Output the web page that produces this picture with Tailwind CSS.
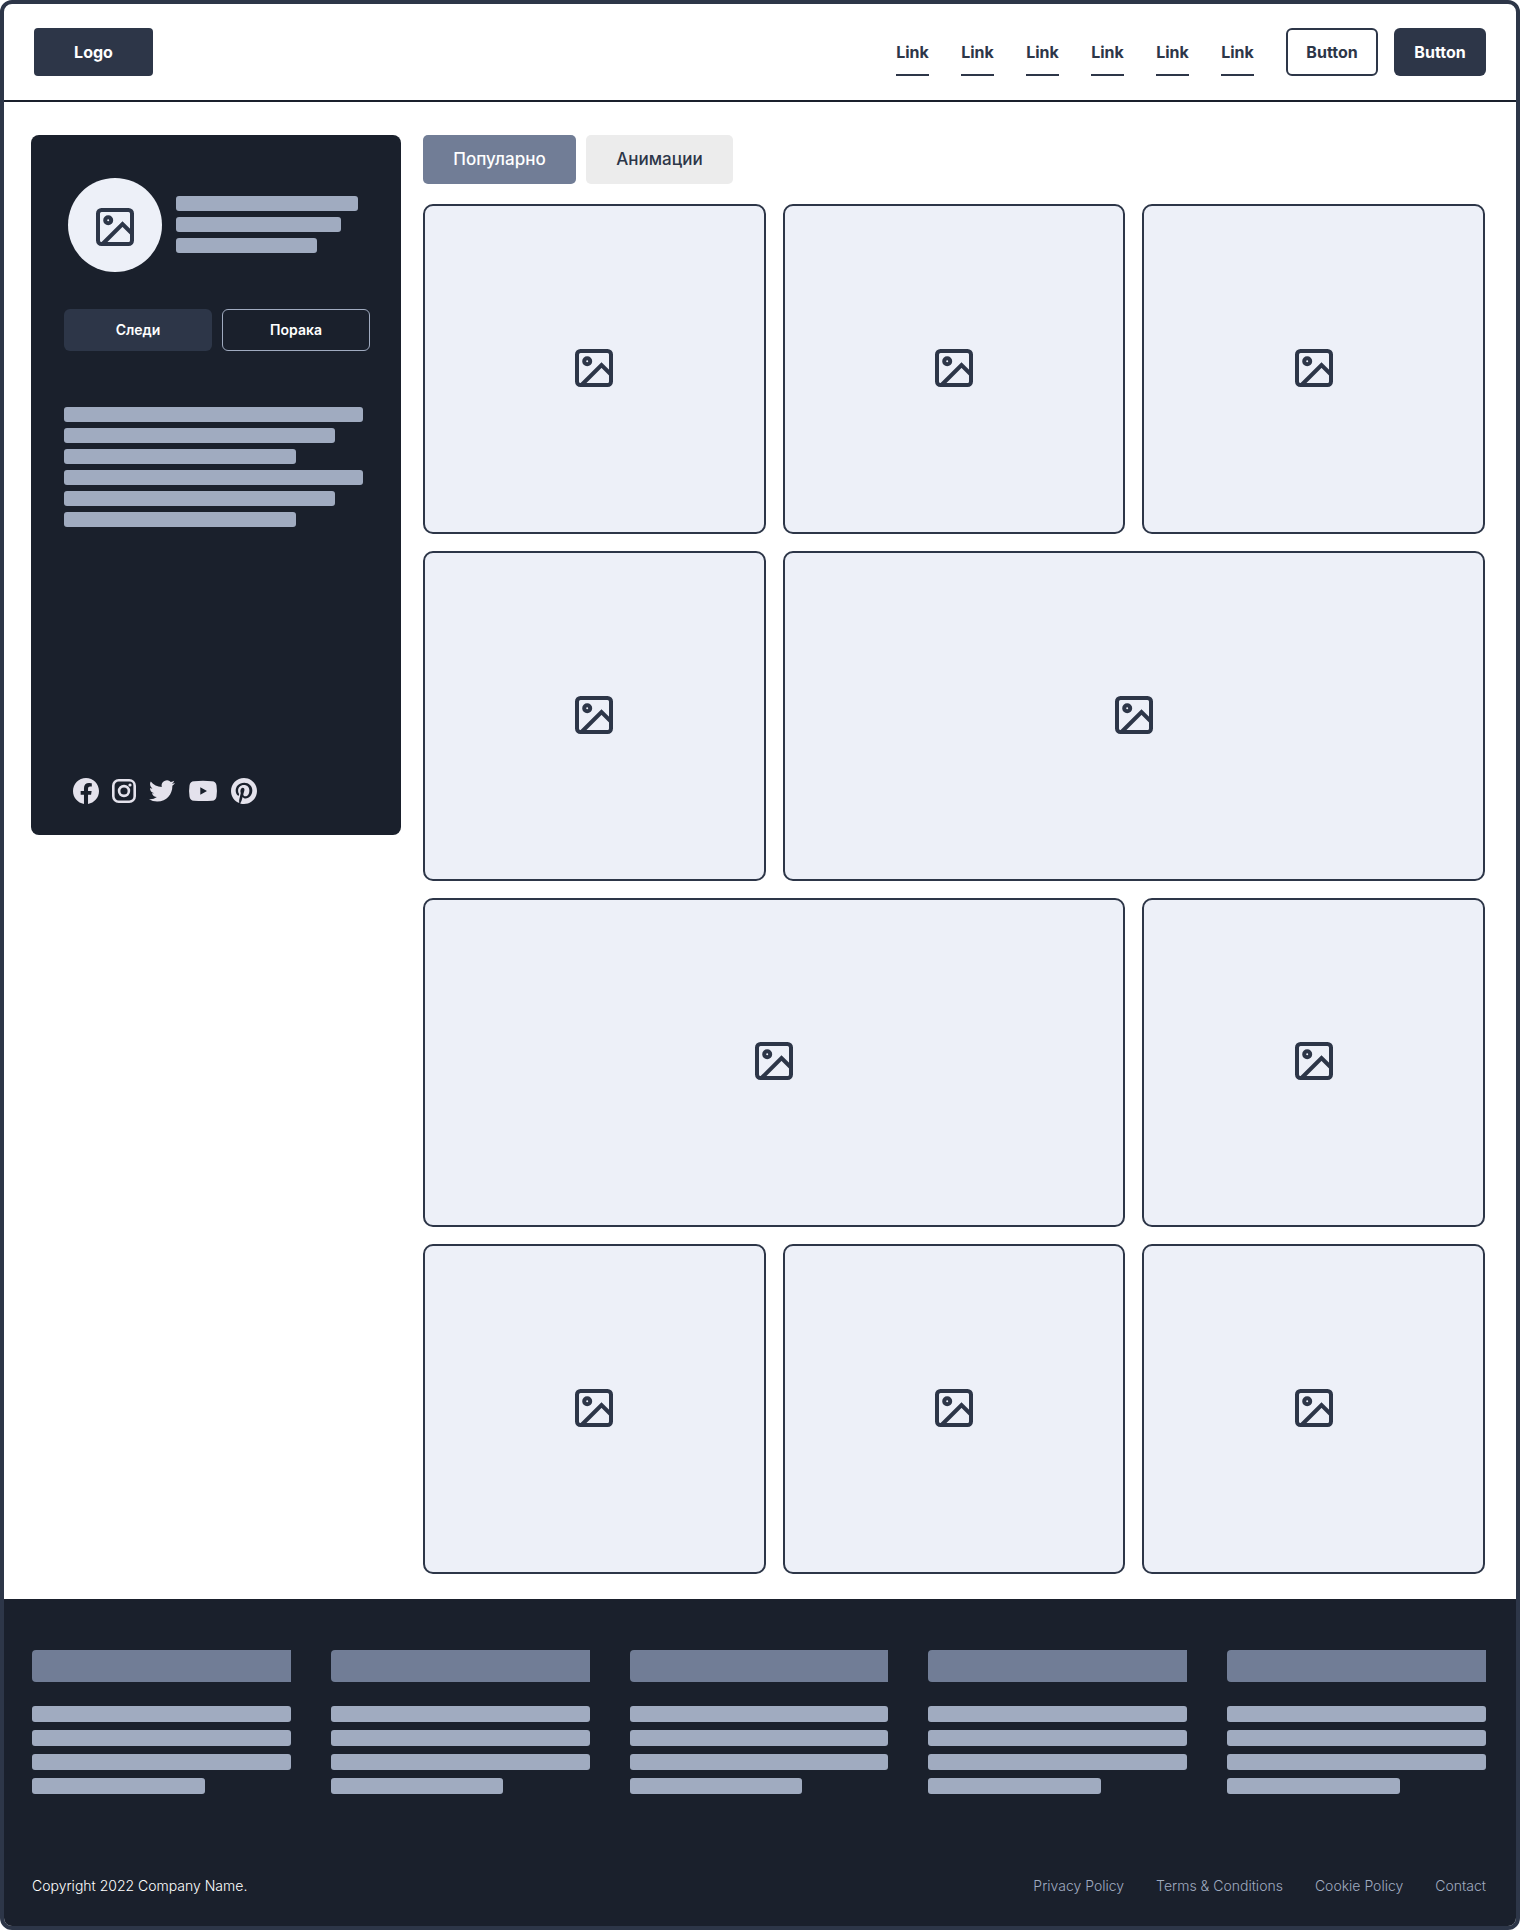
<!DOCTYPE html>
<html lang="mk">
<head>
<meta charset="utf-8">
<meta name="viewport" content="width=device-width, initial-scale=1">
<title>Profile gallery</title>
<script src="https://cdn.jsdelivr.net/npm/@tailwindcss/browser@4"></script>
</head>
<body class="bg-white font-['Inter',sans-serif] text-[#2d3648]">
<svg class="hidden" aria-hidden="true">
  <symbol id="image" viewBox="0 1 48 48">
    <g fill="none" stroke="currentColor" stroke-width="4" stroke-linecap="butt" stroke-linejoin="round">
      <rect x="7" y="7" width="34" height="34" rx="3.5"/>
      <circle cx="17.2" cy="17.2" r="3"/>
      <path d="M12 40.5 31.5 21 41 30.5" stroke-linejoin="miter"/>
    </g>
  </symbol>
</svg>
<div class="flex min-h-screen flex-col overflow-hidden rounded-xl border-4 border-[#2d3648]">
  <header class="flex items-center justify-between border-b-2 border-[#1a202c] px-[30px] py-6 text-base font-bold">
    <a href="#" class="flex h-12 w-[119px] items-center justify-center rounded bg-[#2d3648] text-white">Logo</a>
    <div class="flex items-center gap-8">
      <nav class="flex gap-8">
        <a href="#" class="flex h-12 w-[33px] items-center justify-center border-b-2 border-[#2d3648] pt-0.5">Link</a>
        <a href="#" class="flex h-12 w-[33px] items-center justify-center border-b-2 border-[#2d3648] pt-0.5">Link</a>
        <a href="#" class="flex h-12 w-[33px] items-center justify-center border-b-2 border-[#2d3648] pt-0.5">Link</a>
        <a href="#" class="flex h-12 w-[33px] items-center justify-center border-b-2 border-[#2d3648] pt-0.5">Link</a>
        <a href="#" class="flex h-12 w-[33px] items-center justify-center border-b-2 border-[#2d3648] pt-0.5">Link</a>
        <a href="#" class="flex h-12 w-[33px] items-center justify-center border-b-2 border-[#2d3648] pt-0.5">Link</a>
      </nav>
      <div class="flex gap-4">
        <button class="h-12 w-[92px] rounded-md border-2 border-[#2d3648]">Button</button>
        <button class="h-12 w-[92px] rounded-md bg-[#2d3648] text-white">Button</button>
      </div>
    </div>
  </header>

  <main class="flex items-start gap-[22px] pt-[33px] pr-[31px] pb-[25px] pl-[27px]">
    <aside class="flex h-[700px] w-[370px] shrink-0 flex-col rounded-lg bg-[#1a202c] pt-[43px] pr-[31px] pb-[31px] pl-[33px]">
      <div class="flex gap-[14px] pl-1">
        <div class="flex size-[94px] items-center justify-center rounded-full bg-[#edf0f8] pt-1.5">
          <svg class="size-12"><use href="#image"/></svg>
        </div>
        <div class="flex flex-col gap-1.5 pt-[18px]">
          <div class="h-[15px] w-[182px] rounded-[3px] bg-[#a0abc0]"></div>
          <div class="h-[15px] w-[165px] rounded-[3px] bg-[#a0abc0]"></div>
          <div class="h-[15px] w-[141px] rounded-[3px] bg-[#a0abc0]"></div>
        </div>
      </div>
      <div class="mt-[37px] flex gap-2.5 text-sm font-semibold text-white">
        <button class="h-[42px] w-[148px] rounded-md bg-[#2d3648]">Следи</button>
        <button class="h-[42px] w-[148px] rounded-md border border-[#a0abc0]">Порака</button>
      </div>
      <div class="mt-14 flex flex-col gap-1.5">
        <div class="h-[15px] w-[299px] rounded-[3px] bg-[#a0abc0]"></div>
        <div class="h-[15px] w-[271px] rounded-[3px] bg-[#a0abc0]"></div>
        <div class="h-[15px] w-[232px] rounded-[3px] bg-[#a0abc0]"></div>
        <div class="h-[15px] w-[299px] rounded-[3px] bg-[#a0abc0]"></div>
        <div class="h-[15px] w-[271px] rounded-[3px] bg-[#a0abc0]"></div>
        <div class="h-[15px] w-[232px] rounded-[3px] bg-[#a0abc0]"></div>
      </div>
      <div class="mt-auto flex items-center gap-[13px] pl-[9px] text-[#e4e2ec]">
        <a href="#" aria-label="Facebook"><svg class="size-[26px]" viewBox="0 0 24 24" fill="currentColor"><path d="M24 12.073C24 5.405 18.627 0 12 0S0 5.405 0 12.073C0 18.1 4.388 23.094 10.125 24v-8.437H7.078v-3.49h3.047v-2.66c0-3.025 1.792-4.697 4.533-4.697 1.312 0 2.686.236 2.686.236v2.971h-1.514c-1.491 0-1.956.93-1.956 1.886v2.264h3.328l-.532 3.49h-2.796V24C19.612 23.094 24 18.1 24 12.073z"/></svg></a>
        <a href="#" aria-label="Instagram"><svg class="size-6" viewBox="0 0 24 24" fill="none" stroke="currentColor" stroke-width="2.6"><rect x="1.3" y="1.3" width="21.4" height="21.4" rx="5.4"/><circle cx="12" cy="12" r="4.9"/><circle cx="18" cy="6" r="1.6" fill="currentColor" stroke="none"/></svg></a>
        <a href="#" aria-label="Twitter"><svg class="size-[26px]" viewBox="0 0 24 24" fill="currentColor"><path d="M23.953 4.57a10 10 0 01-2.825.775 4.958 4.958 0 002.163-2.723c-.951.555-2.005.959-3.127 1.184a4.92 4.92 0 00-8.384 4.482C7.69 8.095 4.067 6.13 1.64 3.162a4.822 4.822 0 00-.666 2.475c0 1.71.87 3.213 2.188 4.096a4.904 4.904 0 01-2.228-.616v.06a4.923 4.923 0 003.946 4.827 4.996 4.996 0 01-2.212.085 4.936 4.936 0 004.604 3.417 9.867 9.867 0 01-6.102 2.105c-.39 0-.779-.023-1.17-.067a13.995 13.995 0 007.557 2.209c9.053 0 13.998-7.496 13.998-13.985 0-.21 0-.42-.015-.63A9.935 9.935 0 0024 4.59z"/></svg></a>
        <a href="#" aria-label="YouTube"><svg class="h-[26px] w-[30px]" viewBox="0 0 28 26" fill="currentColor"><path fill-rule="evenodd" d="M5 3.2Q14 2.4 23 3.2 27 3.4 27.5 7.5 28.4 13 27.5 18.5 27 22.5 23 22.8 14 23.4 5 22.8 1 22.5.5 18.5-.4 13 .5 7.5 1 3.4 5 3.2ZM11.3 9.2v7.6l6.7-3.8Z"/></svg></a>
        <a href="#" aria-label="Pinterest"><svg class="size-[26px]" viewBox="0 0 24 24" fill="currentColor"><path d="M12 0C5.373 0 0 5.373 0 12c0 5.084 3.163 9.426 7.627 11.174-.105-.949-.2-2.405.042-3.441.218-.937 1.407-5.965 1.407-5.965s-.359-.719-.359-1.782c0-1.668.967-2.914 2.171-2.914 1.023 0 1.518.769 1.518 1.69 0 1.029-.655 2.568-.994 3.995-.283 1.194.599 2.169 1.777 2.169 2.133 0 3.772-2.249 3.772-5.495 0-2.873-2.064-4.882-5.012-4.882-3.414 0-5.418 2.561-5.418 5.207 0 1.031.397 2.138.893 2.738a.36.36 0 01.083.345l-.333 1.36c-.053.22-.174.267-.402.161-1.499-.698-2.436-2.889-2.436-4.649 0-3.785 2.75-7.262 7.929-7.262 4.163 0 7.398 2.967 7.398 6.931 0 4.136-2.607 7.464-6.227 7.464-1.216 0-2.359-.631-2.75-1.378l-.748 2.853c-.271 1.043-1.002 2.35-1.492 3.146 1.124.347 2.317.535 3.554.535 6.627 0 12-5.373 12-12S18.627 0 12 0z"/></svg></a>
      </div>
    </aside>

    <section class="flex min-w-0 flex-1 flex-col gap-5">
      <div class="flex gap-2.5 text-[17px] font-medium">
        <button class="h-[49px] w-[153px] rounded-[5px] bg-[#717d96] text-white">Популарно</button>
        <button class="h-[49px] w-[147px] rounded-[5px] bg-[#ececec]">Анимации</button>
      </div>
      <div class="grid h-[1370px] grid-cols-3 grid-rows-4 gap-[17px]">
        <div class="flex items-center justify-center rounded-[10px] border-2 border-[#2d3648] bg-[#edf0f8]"><svg class="size-12"><use href="#image"/></svg></div>
        <div class="flex items-center justify-center rounded-[10px] border-2 border-[#2d3648] bg-[#edf0f8]"><svg class="size-12"><use href="#image"/></svg></div>
        <div class="flex items-center justify-center rounded-[10px] border-2 border-[#2d3648] bg-[#edf0f8]"><svg class="size-12"><use href="#image"/></svg></div>
        <div class="flex items-center justify-center rounded-[10px] border-2 border-[#2d3648] bg-[#edf0f8]"><svg class="size-12"><use href="#image"/></svg></div>
        <div class="col-span-2 flex items-center justify-center rounded-[10px] border-2 border-[#2d3648] bg-[#edf0f8]"><svg class="size-12"><use href="#image"/></svg></div>
        <div class="col-span-2 flex items-center justify-center rounded-[10px] border-2 border-[#2d3648] bg-[#edf0f8]"><svg class="size-12"><use href="#image"/></svg></div>
        <div class="flex items-center justify-center rounded-[10px] border-2 border-[#2d3648] bg-[#edf0f8]"><svg class="size-12"><use href="#image"/></svg></div>
        <div class="flex items-center justify-center rounded-[10px] border-2 border-[#2d3648] bg-[#edf0f8]"><svg class="size-12"><use href="#image"/></svg></div>
        <div class="flex items-center justify-center rounded-[10px] border-2 border-[#2d3648] bg-[#edf0f8]"><svg class="size-12"><use href="#image"/></svg></div>
        <div class="flex items-center justify-center rounded-[10px] border-2 border-[#2d3648] bg-[#edf0f8]"><svg class="size-12"><use href="#image"/></svg></div>
      </div>
    </section>
  </main>

  <footer class="flex flex-1 flex-col bg-[#1a202c] pt-[51px] pr-[30px] pb-[30px] pl-7">
    <div class="grid grid-cols-5 gap-10">
      <div class="flex flex-col gap-2">
        <div class="mb-4 h-8 rounded-l bg-[#717d96]"></div>
        <div class="h-4 rounded-[3px] bg-[#a0abc0]"></div>
        <div class="h-4 rounded-[3px] bg-[#a0abc0]"></div>
        <div class="h-4 rounded-[3px] bg-[#a0abc0]"></div>
        <div class="h-4 w-2/3 rounded-[3px] bg-[#a0abc0]"></div>
      </div>
      <div class="flex flex-col gap-2">
        <div class="mb-4 h-8 rounded-l bg-[#717d96]"></div>
        <div class="h-4 rounded-[3px] bg-[#a0abc0]"></div>
        <div class="h-4 rounded-[3px] bg-[#a0abc0]"></div>
        <div class="h-4 rounded-[3px] bg-[#a0abc0]"></div>
        <div class="h-4 w-2/3 rounded-[3px] bg-[#a0abc0]"></div>
      </div>
      <div class="flex flex-col gap-2">
        <div class="mb-4 h-8 rounded-l bg-[#717d96]"></div>
        <div class="h-4 rounded-[3px] bg-[#a0abc0]"></div>
        <div class="h-4 rounded-[3px] bg-[#a0abc0]"></div>
        <div class="h-4 rounded-[3px] bg-[#a0abc0]"></div>
        <div class="h-4 w-2/3 rounded-[3px] bg-[#a0abc0]"></div>
      </div>
      <div class="flex flex-col gap-2">
        <div class="mb-4 h-8 rounded-l bg-[#717d96]"></div>
        <div class="h-4 rounded-[3px] bg-[#a0abc0]"></div>
        <div class="h-4 rounded-[3px] bg-[#a0abc0]"></div>
        <div class="h-4 rounded-[3px] bg-[#a0abc0]"></div>
        <div class="h-4 w-2/3 rounded-[3px] bg-[#a0abc0]"></div>
      </div>
      <div class="flex flex-col gap-2">
        <div class="mb-4 h-8 rounded-l bg-[#717d96]"></div>
        <div class="h-4 rounded-[3px] bg-[#a0abc0]"></div>
        <div class="h-4 rounded-[3px] bg-[#a0abc0]"></div>
        <div class="h-4 rounded-[3px] bg-[#a0abc0]"></div>
        <div class="h-4 w-2/3 rounded-[3px] bg-[#a0abc0]"></div>
      </div>
    </div>
    <div class="mt-auto flex items-center justify-between text-sm leading-5 font-light text-[#a0abc0]">
      <p class="text-white">Copyright 2022 Company Name.</p>
      <nav class="flex gap-8">
        <a href="#">Privacy Policy</a>
        <a href="#">Terms &amp; Conditions</a>
        <a href="#">Cookie Policy</a>
        <a href="#">Contact</a>
      </nav>
    </div>
  </footer>
</div>
</body>
</html>
